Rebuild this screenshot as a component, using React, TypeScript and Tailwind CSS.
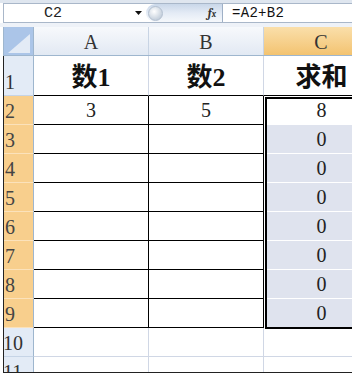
const cols = ["A", "B", "C"];
const header = ["数1", "数2", "求和"];
const body: Record<number, string[]> = {
  2: ["3", "5", "8"],
  3: ["", "", "0"],
  4: ["", "", "0"],
  5: ["", "", "0"],
  6: ["", "", "0"],
  7: ["", "", "0"],
  8: ["", "", "0"],
  9: ["", "", "0"],
};

function FormulaBar() {
  return (
    <div className="ml-[3px] flex h-[20px] items-stretch border-y border-l border-[#a9b7c9] bg-white">
      <div className="flex w-[127px] items-center pl-[40px]">
        <span className="font-['Liberation_Mono'] text-[15px] leading-none text-[#222]">C2</span>
      </div>
      <div className="flex w-[15px] items-center justify-center">
        <svg width="7" height="4" viewBox="0 0 7 4">
          <path d="M0 0 H7 L3.5 4 Z" fill="#111" />
        </svg>
      </div>
      <div className="flex w-[77px] items-center justify-between rounded-l-full border-r border-[#9fb0c6] bg-gradient-to-b from-[#c9d7e9] via-[#e4ebf5] to-[#f5f8fb] pl-[2px] pr-[6px]">
        <div className="h-[15px] w-[15px] rounded-full border border-[#b3c0d0] bg-[radial-gradient(circle_at_40%_35%,#ffffff,#c3cedb_75%)]" />
        <span className="font-serif text-[12px] font-bold italic text-[#333]">
          f<span className="text-[9px]">x</span>
        </span>
      </div>
      <div className="flex items-center pl-[9px]">
        <span className="font-['Liberation_Mono'] text-[14px] leading-none tracking-[0.3px] text-[#111]">=A2+B2</span>
      </div>
    </div>
  );
}

function ColumnHeaders() {
  return (
    <div className="ml-[3px] flex h-[29px] border-b border-[#9eb6ce]">
      <div className="relative w-[31px] shrink-0 border-r border-l border-[#9eb6ce] bg-[#abc5e8]">
        <svg className="absolute bottom-[2px] right-[3px]" width="22" height="19" viewBox="0 0 22 19">
          <path d="M22 0 V19 H0 Z" fill="#e3ebf6" />
        </svg>
      </div>
      {cols.map((c) => (
        <div
          key={c}
          className={
            c === "C"
              ? "flex w-[115px] shrink-0 items-center justify-center border-r border-[#e2b46a] bg-gradient-to-b from-[#fadfaa] to-[#f3c370] pt-[1px] text-[20px] text-[#333]"
              : "flex w-[115px] shrink-0 items-center justify-center border-r border-[#c8d4e4] bg-gradient-to-b from-[#f7f9fc] to-[#e2e9f3] pt-[1px] text-[20px] text-[#333]"
          }
        >
          {c}
        </div>
      ))}
    </div>
  );
}

function RowHeader({ n, selected }: { n: number; selected: boolean }) {
  return (
    <div
      className={
        selected
          ? "flex w-[30px] shrink-0 items-end border-r border-b border-r-[#9eb6ce] border-b-[#fbe2bb] bg-[#f8cf8d] pb-[3px] text-[20px] leading-none text-[#444]"
          : "flex w-[30px] shrink-0 items-end border-r border-b border-r-[#9eb6ce] border-b-[#c6d4e6] bg-[#e3ebf6] pb-[3px] text-[20px] leading-none text-[#333]"
      }
    >
      <span className={n >= 10 ? "-ml-[1px]" : "ml-[1px]"}>{n}</span>
    </div>
  );
}

function Sheet() {
  return (
    <div className="relative ml-[3px] h-[317px] overflow-hidden border-b border-l border-[#222]">
      {/* row 1 */}
      <div className="flex h-[40px]">
        <RowHeader n={1} selected={false} />
        {header.map((h, i) => (
          <div
            key={h}
            className={
              i < 2
                ? "flex w-[115px] shrink-0 items-end justify-center border-r border-b border-r-[#d0d7e5] border-b-black pb-[4px] text-[26px] font-bold leading-none text-[#111]"
                : "flex w-[115px] shrink-0 items-end justify-center border-b border-b-black pb-[4px] text-[26px] font-bold leading-none text-[#111]"
            }
          >
            {h}
          </div>
        ))}
      </div>

      {Object.keys(body).map((k) => {
        const n = Number(k);
        const vals = body[n];
        return (
          <div key={n} className="flex h-[29px]">
            <RowHeader n={n} selected />
            <div className="flex w-[115px] shrink-0 items-end justify-center border-r border-b border-black pb-[4px] text-[20px] leading-none text-[#222]">
              {vals[0]}
            </div>
            <div className="flex w-[115px] shrink-0 items-end justify-center border-r border-b border-black pb-[4px] text-[20px] leading-none text-[#222]">
              {vals[1]}
            </div>
            <div
              className={
                n === 2
                  ? "flex w-[115px] shrink-0 items-end justify-center border-b border-white bg-white pb-[4px] text-[20px] leading-none text-[#222]"
                  : "flex w-[115px] shrink-0 items-end justify-center border-b border-white bg-[#dfe3ee] pb-[4px] text-[20px] leading-none text-[#222]"
              }
            >
              {vals[2]}
            </div>
          </div>
        );
      })}

      {[10, 11].map((n) => (
        <div key={n} className="flex h-[29px]">
          <RowHeader n={n} selected={false} />
          <div className="w-[115px] shrink-0 border-r border-b border-[#d0d7e5]" />
          <div className="w-[115px] shrink-0 border-r border-b border-[#d0d7e5]" />
          <div className="w-[115px] shrink-0 border-r border-b border-[#d0d7e5]" />
        </div>
      ))}

      {/* selection box over C2:C9 */}
      <div className="absolute left-[261px] top-[41px] h-[232px] w-[130px] border-2 border-black shadow-[0_0_0_1px_white]" />
    </div>
  );
}

export default function App() {
  return (
    <div className="h-[383px] w-[352px] overflow-hidden bg-white font-['Liberation_Serif','Noto_Sans_CJK_SC',serif] text-[#222]">
      <div className="h-[3px] bg-[#dfe6ef]" />
      <FormulaBar />
      <div className="h-[4px] bg-[#eef2f8]" />
      <ColumnHeaders />
      <Sheet />
    </div>
  );
}
